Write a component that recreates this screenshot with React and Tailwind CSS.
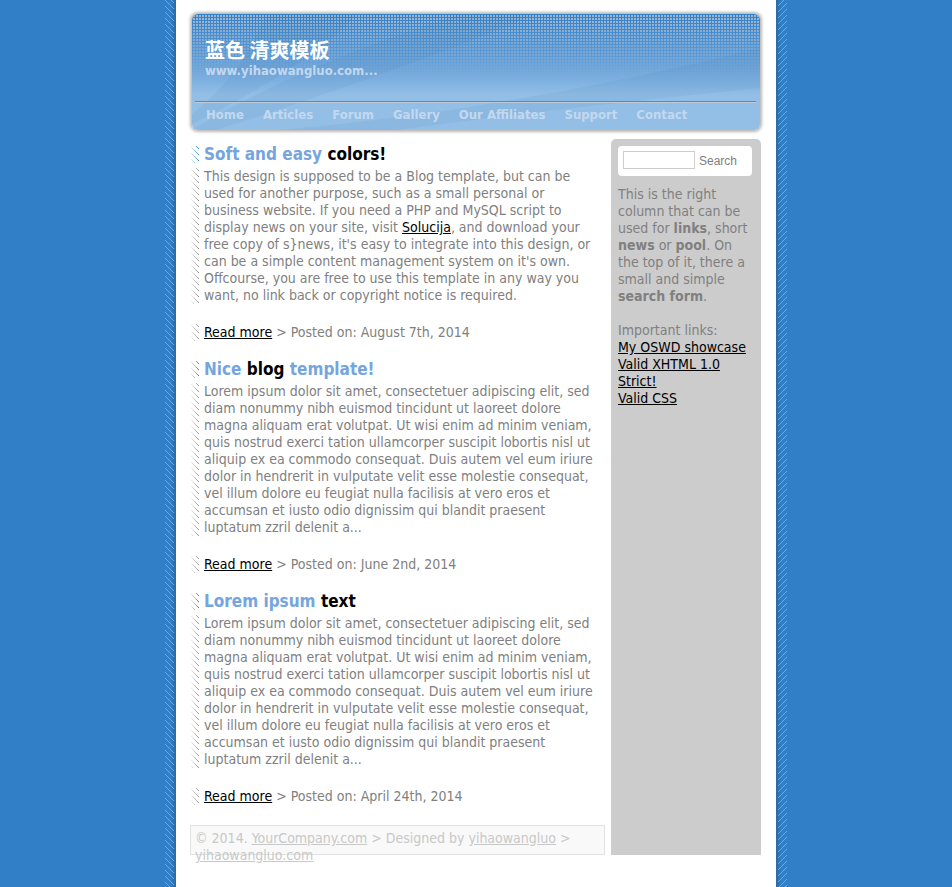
import { useId } from "react";

const NAV = ["Home", "Articles", "Forum", "Gallery", "Our Affiliates", "Support", "Contact"];

const LOREM =
  "Lorem ipsum dolor sit amet, consectetuer adipiscing elit, sed diam nonummy nibh euismod tincidunt ut laoreet dolore magna aliquam erat volutpat. Ut wisi enim ad minim veniam, quis nostrud exerci tation ullamcorper suscipit lobortis nisl ut aliquip ex ea commodo consequat. Duis autem vel eum iriure dolor in hendrerit in vulputate velit esse molestie consequat, vel illum dolore eu feugiat nulla facilisis at vero eros et accumsan et iusto odio dignissim qui blandit praesent luptatum zzril delenit a...";

/* One-pixel diagonal lines, repeated every six pixels. */
function Hatch({ className = "", flip = false }) {
  const id = useId();
  const steps = [0, 1, 2, 3, 4, 5];
  return (
    <svg className={"absolute inset-0 h-full w-full " + className} shapeRendering="crispEdges" aria-hidden="true">
      <pattern id={id} width="6" height="6" patternUnits="userSpaceOnUse">
        {steps.map((i) => (
          <rect key={i} x={flip ? 5 - i : i} y={i} width="1" height="1" fill="currentColor" />
        ))}
      </pattern>
      <rect width="100%" height="100%" fill={`url(#${id})`} />
    </svg>
  );
}

function Striped({ tone, children }) {
  return (
    <div className="flex gap-[5px]">
      <div className="relative w-[9px] shrink-0">
        <Hatch className={tone} />
        <div className="absolute inset-0 bg-linear-to-r from-white to-transparent" />
      </div>
      <div className="min-w-0 flex-1 pr-[9px]">{children}</div>
    </div>
  );
}

function Post({ title, date, children }) {
  return (
    <article className="mb-5">
      <Striped tone="text-[#2f86d8]">
        <h2 className="text-[17px] leading-[17px] font-bold text-[#75a5de]">{title}</h2>
      </Striped>
      <div className="mt-[5px]">
        <Striped tone="text-[#909090]">
          <p>{children}</p>
        </Striped>
      </div>
      <div className="mt-5">
        <Striped tone="text-[#909090]">
          <p>
            <a href="#" className="text-black underline">Read more</a> &gt; Posted on: {date}
          </p>
        </Striped>
      </div>
    </article>
  );
}

function Banner() {
  return (
    <header className="relative mr-px ml-0.5 h-[116px] overflow-hidden rounded-md bg-linear-to-b from-[#2f80ca] via-[#69a3da] via-45% to-[#93bee6] to-70% shadow-[0_0_3px_2px_rgba(0,0,0,0.28)]">
      <div className="absolute inset-x-0 top-0 h-[66px] mask-b-from-10% mask-b-to-100% text-[#9db6cf]">
        <svg className="h-full w-full" shapeRendering="crispEdges" aria-hidden="true">
          <pattern id="banner-grid" width="3" height="3" patternUnits="userSpaceOnUse">
            <rect x="1" y="1" width="2" height="2" fill="currentColor" />
          </pattern>
          <rect width="100%" height="100%" fill="url(#banner-grid)" />
        </svg>
      </div>
      <svg className="absolute inset-0 h-full w-full" viewBox="0 0 568 116" preserveAspectRatio="none" aria-hidden="true">
        <g fill="#2f6ea8" fillOpacity="0.08">
          <path d="M0 100 Q48 64 74 0 H165 Q120 50 0 110 Z" />
          <path d="M0 116 Q110 50 270 0 H345 Q200 60 24 116 Z" />
          <path d="M90 116 Q330 94 568 34 V74 Q350 96 205 116 Z" />
        </g>
      </svg>
      <div className="relative pt-6 pl-[13px]">
        <h1 className="font-['Noto_Sans_CJK_SC',sans-serif] text-[20px] leading-6 font-bold text-white">蓝色 清爽模板</h1>
        <p className="text-[13px] leading-[17px] font-bold text-[#c3d8ef]">www.yihaowangluo.com...</p>
      </div>
      <nav className="relative mt-[22px] mr-1 ml-[3px] border-t border-[#4a8dcb]">
        <ul className="flex gap-[19px] border-t border-[#bccbdc] pt-[3px] pl-[11px] text-[13px] leading-[17px] font-bold text-[#c3d8ef]">
          {NAV.map((item) => (
            <li key={item}>
              <a href="#">{item}</a>
            </li>
          ))}
        </ul>
      </nav>
    </header>
  );
}

function Sidebar() {
  return (
    <aside className="w-[150px] shrink-0 rounded-t-[5px] bg-[#ccc] py-[7px] pl-[7px]">
      <form className="flex h-[30px] w-[134px] items-center gap-1 rounded bg-white pl-[5px]">
        <input type="text" aria-label="Search text" className="mb-0.5 h-[18px] w-[72px] border border-[#ccc] bg-white px-1 text-xs" />
        <button type="button" className="font-['Liberation_Sans',sans-serif] text-[12px]">Search</button>
      </form>
      <div className="mt-[10px] w-[134px]">
        <p>
          This is the right column that can be used for <b>links</b>, short <b>news</b> or <b>pool</b>. On the top of
          it, there a small and simple <b>search form</b>.
        </p>
        <p className="mt-[17px]">Important links:</p>
        <ul className="text-black underline">
          <li><a href="#">My OSWD showcase</a></li>
          <li><a href="#">Valid XHTML 1.0 Strict!</a></li>
          <li><a href="#">Valid CSS</a></li>
        </ul>
      </div>
    </aside>
  );
}

export default function App() {
  return (
    <div className="flex min-h-screen justify-center bg-[#3180c7] font-['DejaVu_Sans_Condensed','DejaVu_Sans',sans-serif] text-[14px] leading-[17px] text-[#808080]">
      <div className="relative w-[11px] bg-linear-to-r from-[#3180c7] from-50% to-[#2a69a5]">
        <div className="absolute inset-y-0 left-0 w-[9px]">
          <Hatch className="text-[#64abee]" />
        </div>
      </div>
      <div className="w-[600px] bg-white pt-[14px] pr-[15px] pb-8 pl-[14px]">
        <Banner />
        <div className="mt-[9px] flex gap-[6px]">
          <main className="min-w-0 flex-1 pt-[7px]">
            <Post title={<>Soft and easy <span className="text-black">colors!</span></>} date="August 7th, 2014">
              This design is supposed to be a Blog template, but can be used for another purpose, such as a small
              personal or business website. If you need a PHP and MySQL script to display news on your site, visit{" "}
              <a href="#" className="text-black underline">Solucija</a>, and download your free copy of s&#125;news,
              it's easy to integrate into this design, or can be a simple content management system on it's own.
              Offcourse, you are free to use this template in any way you want, no link back or copyright notice is
              required.
            </Post>
            <Post title={<>Nice <span className="text-black">blog</span> template!</>} date="June 2nd, 2014">
              {LOREM}
            </Post>
            <Post title={<>Lorem ipsum <span className="text-black">text</span></>} date="April 24th, 2014">
              {LOREM}
            </Post>
            <footer className="h-[30px] border border-[#e2e2e2] bg-[#f9f9f9] px-1 pt-1 text-[#c8c8c8]">
              © 2014. <a href="#" className="underline">YourCompany.com</a> &gt; Designed by{" "}
              <a href="#" className="underline">yihaowangluo</a> &gt;{" "}
              <a href="#" className="underline">yihaowangluo.com</a>
            </footer>
          </main>
          <Sidebar />
        </div>
      </div>
      <div className="relative w-[11px] bg-linear-to-l from-[#3180c7] from-50% to-[#2a69a5]">
        <div className="absolute inset-y-0 right-0 w-[9px]">
          <Hatch className="text-[#64abee]" flip />
        </div>
      </div>
    </div>
  );
}
